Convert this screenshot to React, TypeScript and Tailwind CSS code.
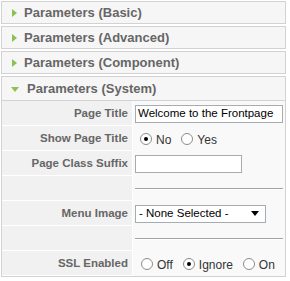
import React from "react";

const Arrow = ({ open }: { open?: boolean }) =>
  open ? (
    <svg width="10" height="8" viewBox="0 0 10 8" className="shrink-0">
      <path d="M1 2 L9 2 L5 7 Z" fill="#8cc152" />
    </svg>
  ) : (
    <svg width="8" height="10" viewBox="0 0 8 10" className="shrink-0">
      <path d="M2 1 L7 5 L2 9 Z" fill="#8cc152" />
    </svg>
  );

const Header = ({ title, open }: { title: string; open?: boolean }) => (
  <div
    className={`flex items-center gap-[7px] bg-[#f6f6f6] pl-[8px] text-[13px] font-bold text-[#666] ${
      open ? "h-[23px]" : "h-[21px]"
    }`}
  >
    <Arrow open={open} />
    <span className={open ? "" : "-ml-[1px]"}>{title}</span>
  </div>
);

const Radio = ({ checked }: { checked?: boolean }) => (
  <span className="flex h-[12px] w-[12px] shrink-0 items-center justify-center rounded-full border border-[#8c8c8c] bg-white">
    {checked && <span className="h-[4px] w-[4px] rounded-full bg-black" />}
  </span>
);

const RadioOpt = ({ label, checked }: { label: string; checked?: boolean }) => (
  <span className="flex items-center gap-[4px]">
    <Radio checked={checked} />
    <span className="mt-[3px] text-[12px] text-[#333]">{label}</span>
  </span>
);

const Row = ({ label, children }: { label?: string; children?: React.ReactNode }) => (
  <div className="grid h-[25px] grid-cols-[131px_1fr]">
    <div className="flex h-full items-center justify-end border-r border-b border-white bg-[#f1f1f1] pt-[2px] pr-[4px] text-[11.5px] font-bold leading-none text-[#666]">
      {label}
    </div>
    <div className="flex h-full items-center pl-[2px] pr-[2px]">{children}</div>
  </div>
);

const Sep = () => <div className="h-[2px] w-full border-t border-[#a3a3a3] border-b border-b-white" />;

export default function App() {
  return (
    <div className="h-[281px] w-[290px] overflow-hidden bg-white pt-[1px] pl-[1px] font-['Liberation_Sans',Arial,sans-serif]">
      <div className="flex w-[285px] flex-col gap-[2px]">
        <div className="border border-[#d2d2d2]">
          <Header title="Parameters (Basic)" />
        </div>
        <div className="border border-[#d2d2d2]">
          <Header title="Parameters (Advanced)" />
        </div>
        <div className="border border-[#d2d2d2]">
          <Header title="Parameters (Component)" />
        </div>
        <div className="border border-[#d2d2d2] bg-[#f9f9f9]">
          <div className="border-b border-[#d2d2d2]">
            <Header title="Parameters (System)" open />
          </div>
          <Row label="Page Title">
            <div className="flex h-[18px] w-full items-center border border-[#a5acb2] bg-white pl-[2px] text-[11.5px] text-black">
              Welcome to the Frontpage
            </div>
          </Row>
          <Row label="Show Page Title">
            <div className="flex items-center gap-[10px] pl-[5px]">
              <RadioOpt label="No" checked />
              <RadioOpt label="Yes" />
            </div>
          </Row>
          <Row label="Page Class Suffix">
            <div className="h-[18px] w-[107px] border border-[#a5acb2] bg-white" />
          </Row>
          <Row>
            <Sep />
          </Row>
          <Row label="Menu Image">
            <div className="flex h-[18px] w-[131px] items-center justify-between border border-[#a5acb2] bg-white pl-[3px] pr-[6px] text-[11.5px] text-black">
              <span>- None Selected -</span>
              <svg width="8" height="5" viewBox="0 0 8 5">
                <path d="M0 0 L8 0 L4 5 Z" fill="#000" />
              </svg>
            </div>
          </Row>
          <Row>
            <Sep />
          </Row>
          <Row label="SSL Enabled">
            <div className="flex items-center gap-[10px] pl-[6px]">
              <RadioOpt label="Off" />
              <RadioOpt label="Ignore" checked />
              <RadioOpt label="On" />
            </div>
          </Row>
        </div>
      </div>
    </div>
  );
}
